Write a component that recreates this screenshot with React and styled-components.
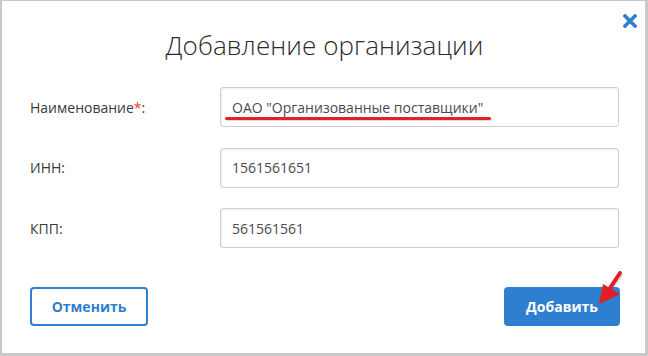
import React from "react";
import styled, { createGlobalStyle } from "styled-components";

const Global = createGlobalStyle`
  html, body { margin: 0; padding: 0; background: #fff; }
  body { font-family: "Open Sans", "Noto Sans", sans-serif; }
  * { box-sizing: border-box; }
`;

const Dialog = styled.div`
  position: relative;
  width: 648px;
  height: 356px;
  background: #fff;
  border-style: solid;
  border-color: #c9c9c9;
  border-width: 1px 3px 3px 2px;
  padding: 27px 26px 0 28px;
  display: flex;
  flex-direction: column;
`;

const Close = styled.button`
  position: absolute;
  top: 12px;
  right: 7px;
  width: 16px;
  height: 16px;
  padding: 0;
  border: 0;
  background: transparent;
  cursor: pointer;
  display: flex;
  align-items: center;
  justify-content: center;
`;

const Title = styled.h1`
  margin: 0;
  font-family: "Open Sans", sans-serif;
  font-weight: 300;
  font-size: 26px;
  line-height: 34px;
  color: #2b2b2b;
  text-align: center;
  letter-spacing: 0.1px;
`;

const Form = styled.div`
  margin-top: 25px;
  display: grid;
  grid-template-columns: 190px 399px;
  grid-auto-rows: 40px;
  row-gap: 20.5px;
  align-items: center;
`;

const Label = styled.label`
  font-size: 14px;
  color: #3a3a3a;
`;

const Req = styled.span`
  color: #e0433a;
`;

const Field = styled.div`
  position: relative;
  height: 40px;
  border: 1px solid #cfcfcf;
  border-radius: 3px;
  box-shadow: inset 1px 1px 2px rgba(0, 0, 0, 0.08);
  display: flex;
  align-items: center;
  padding-left: 11px;
  font-size: 14px;
  color: #4a4a4a;
`;

const Underline = styled.span`
  position: absolute;
  left: 4px;
  top: 29px;
  width: 266px;
  height: 3px;
  border-radius: 2px;
  background: #e3202a;
  box-shadow: 1px 1px 1px rgba(0, 0, 0, 0.15);
`;

const Actions = styled.div`
  margin-top: 38.5px;
  display: flex;
  justify-content: space-between;
  width: 590px;
`;

const Button = styled.button`
  height: 39px;
  width: ${(p) => p.$w}px;
  border-radius: 4px;
  border: 2px solid #2f7fd1;
  background: ${(p) => (p.$primary ? "#2f7fd1" : "#fff")};
  color: ${(p) => (p.$primary ? "#fff" : "#2f7fd1")};
  font-family: "Open Sans", sans-serif;
  font-weight: 700;
  font-size: 14px;
  cursor: pointer;
  padding: 0;
`;

const Arrow = styled.svg`
  position: absolute;
  left: 590px;
  top: 265px;
  overflow: visible;
  pointer-events: none;
`;

export default function App() {
  return (
    <>
      <Global />
      <Dialog>
        <Close aria-label="close">
          <svg width="14" height="14" viewBox="0 0 14 14">
            <path
              d="M2 2 L12 12 M12 2 L2 12"
              stroke="#2f7fd1"
              strokeWidth="3.6"
              strokeLinecap="square"
            />
          </svg>
        </Close>
        <Title>Добавление организации</Title>
        <Form>
          <Label>
            Наименование<Req>*</Req>:
          </Label>
          <Field>
            ОАО "Организованные поставщики"
            <Underline />
          </Field>
          <Label>ИНН:</Label>
          <Field>1561561651</Field>
          <Label>КПП:</Label>
          <Field>561561561</Field>
        </Form>
        <Actions>
          <Button $w={118}>Отменить</Button>
          <Button $w={116} $primary>
            Добавить
          </Button>
        </Actions>
        <Arrow width="40" height="45">
          <g transform="translate(1,1)" opacity="0.25">
            <path d="M28 7 L18 22" stroke="#555" strokeWidth="4" />
            <path d="M7 38 L11 19 L27 27 Z" fill="#555" />
          </g>
          <path d="M28 7 L18 22" stroke="#e31e24" strokeWidth="4" strokeLinecap="round" />
          <path d="M7 38 L11 18 L28 28 Z" fill="#e31e24" />
        </Arrow>
      </Dialog>
    </>
  );
}
